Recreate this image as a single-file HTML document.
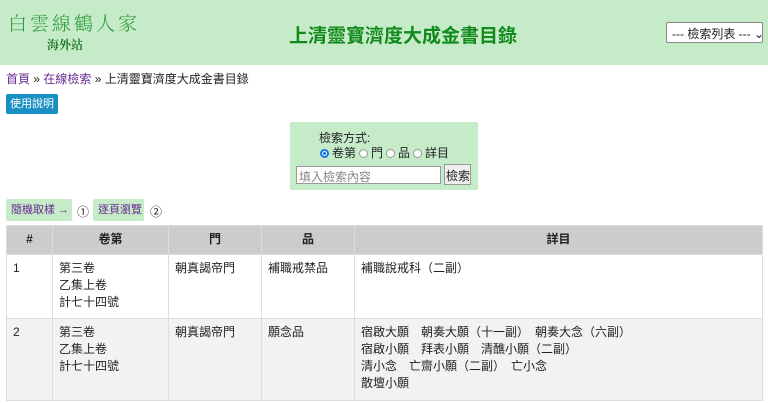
<!DOCTYPE html>
<html><head><meta charset="utf-8"><style>
*{box-sizing:border-box}
body{margin:0;width:768px;height:403px;overflow:hidden;font-family:"Liberation Sans","Noto Sans CJK TC",sans-serif;font-size:12px;color:#222;background:#fff;position:relative}
.hdr{position:absolute;left:0;top:0;width:768px;height:65px;background:#c6ebc9}
.logo{position:absolute;left:8px;top:9px;font-family:"Noto Serif CJK SC",serif;font-size:19px;color:#2e9a3a;letter-spacing:3px;font-weight:300}
.sub{position:absolute;left:47px;top:36px;font-family:"Noto Serif CJK SC",serif;font-size:12px;font-weight:bold;color:#1f7a28}
.title{position:absolute;left:289px;top:21px;font-size:19px;font-weight:bold;color:#138a1c;font-family:"Noto Sans CJK TC",sans-serif}
.sel{position:absolute;left:666px;top:22px;width:97px;height:21px;background:#fff;border:1px solid #888;border-radius:2px;font-size:12px;padding:2px 0 0 5px;white-space:nowrap;overflow:hidden}
.crumb{position:absolute;left:6px;top:70px;font-size:12px}
.crumb a{color:#6a2c91;text-decoration:none}
.btn{position:absolute;left:6px;top:94px;width:52px;height:20px;background:#1a8fc4;color:#fff;border-radius:2px;font-size:11px;text-align:center;line-height:20px}
.sbox{position:absolute;left:290px;top:122px;width:188px;height:68px;background:#c6ebc9;border-radius:2px}
.sbox .l1{position:absolute;left:29px;top:7px}
.sbox .l2{position:absolute;left:27px;top:22px;white-space:nowrap}
.rad{display:inline-block;width:9px;height:9px;border:1px solid #999;border-radius:50%;vertical-align:-1px;margin:0 3px 0 3px;background:#fff}
.rad.on{border:2px solid #1a73e8;background:radial-gradient(#1a73e8 40%,#fff 45%)}
.inp{position:absolute;left:6px;top:44px;width:145px;height:18px;background:#fff;border:1px solid #999;color:#888;font-size:12px;padding:1px 2px;white-space:nowrap}
.sb{position:absolute;left:154px;top:42px;width:27px;height:21px;background:#eee;border:1px solid #999;font-size:12px;padding:2px 0 0 1px;white-space:nowrap;overflow:hidden}
.g{position:absolute;top:199px;height:22px;background:#c6ebc9;color:#6a2c91;font-size:11px;line-height:22px;padding-left:5px;border-radius:2px;white-space:nowrap}
.n{position:absolute;top:203px;font-size:12px}
table{position:absolute;left:6px;top:225px;width:757px;border-collapse:collapse}
td,th{border:1px solid #ddd;vertical-align:top;text-align:left;padding:5px 6px;line-height:17px;font-size:12px}
th{background:#ccc;text-align:center;height:29px;padding:5px;font-weight:bold}
tr.r1 td{height:64px}
tr.r2 td{background:#f2f2f2;height:82px}
</style></head><body>
<div class="hdr">
<div class="logo">白雲線鶴人家</div>
<div class="sub">海外站</div>
<div class="title">上清靈寶濟度大成金書目錄</div>
<div class="sel">--- 檢索列表 --- ⌄</div>
</div>
<div class="crumb"><a>首頁</a> » <a>在線檢索</a> » 上清靈寶濟度大成金書目錄</div>
<div class="btn">使用說明</div>
<div class="sbox">
<div class="l1">檢索方式:</div>
<div class="l2"><span class="rad on"></span>卷第<span class="rad"></span>門<span class="rad"></span>品<span class="rad"></span>詳目</div>
<div class="inp">填入檢索內容</div>
<div class="sb">檢索</div>
</div>
<div class="g" style="left:6px;width:66px">隨機取樣 →</div>
<div class="n" style="left:77px">①</div>
<div class="g" style="left:93px;width:51px">逐頁瀏覽</div>
<div class="n" style="left:150px">②</div>
<table>
<tr><th style="width:46px">#</th><th style="width:116px">卷第</th><th style="width:93px">門</th><th style="width:93px">品</th><th>詳目</th></tr>
<tr class="r1"><td>1</td><td>第三卷<br>乙集上卷<br>計七十四號</td><td>朝真謁帝門</td><td>補職戒禁品</td><td>補職說戒科（二副）</td></tr>
<tr class="r2"><td>2</td><td>第三卷<br>乙集上卷<br>計七十四號</td><td>朝真謁帝門</td><td>願念品</td><td>宿啟大願　朝奏大願（十一副）　朝奏大念（六副）<br>宿啟小願　拜表小願　清醮小願（二副）<br>清小念　亡齋小願（二副）　亡小念<br>散壇小願</td></tr>
</table>
</body></html>
